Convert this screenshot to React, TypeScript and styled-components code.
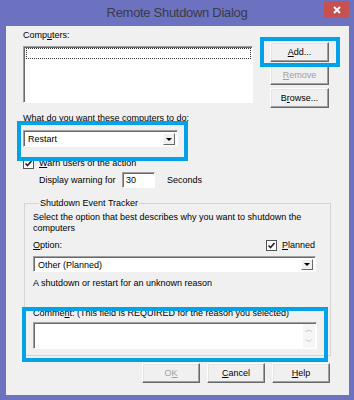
import styled, { createGlobalStyle } from 'styled-components'

const GlobalStyle = createGlobalStyle`
  html, body {
    margin: 0;
    padding: 0;
  }
  body {
    font-family: "Liberation Sans", Arial, sans-serif;
    font-size: 9px;
    color: #000;
  }
  * {
    box-sizing: border-box;
  }
`

function Check() {
  return (
    <svg width="9" height="9" viewBox="0 0 9 9">
      <path d="M1.5 4.5 L3.5 6.5 L7.5 2" fill="none" stroke="#222" strokeWidth="1.6" />
    </svg>
  )
}

function CloseGlyph() {
  return (
    <svg width="8" height="8" viewBox="0 0 8 8">
      <path d="M1 1 L7 7 M7 1 L1 7" stroke="#fff" strokeWidth="2" />
    </svg>
  )
}

function App() {
  return (
    <>
      <GlobalStyle />
      <Frame>
        <TitleBar>
          <TitleSpacer />
          <Title>Remote Shutdown Dialog</Title>
          <CloseButton><CloseGlyph /></CloseButton>
        </TitleBar>
        <Client>
          <TopSection>
            <div>
              <Label>Comp<u>u</u>ters:</Label>
              <ListBox>
                <FocusRow />
              </ListBox>
            </div>
            <ButtonColumn>
              <Button><u>A</u>dd...</Button>
              <Button disabled><u>R</u>emove</Button>
              <Button>B<u>r</u>owse...</Button>
            </ButtonColumn>
          </TopSection>

          <Label $top={4}><u>W</u>hat do you want these computers to do:</Label>
          <Select $width={155} $height={17} $top={6}>
            <span>Restart</span>
            <Arrow />
          </Select>

          <CheckRow $top={10}>
            <CheckBox><Check /></CheckBox>
            <span><u>W</u>arn users of the action</span>
          </CheckRow>

          <WarnRow>
            <WarnLabel>Display warning for</WarnLabel>
            <NumberBox>30</NumberBox>
            <span>Seconds</span>
          </WarnRow>

          <Group>
            <Legend>Shutdown Event Tracker</Legend>
            <Para>Select the option that best describes why you want to shutdown the computers</Para>
            <OptionRow>
              <span><u>O</u>ption:</span>
              <CheckRow $top={0}>
                <CheckBox><Check /></CheckBox>
                <span><u>P</u>lanned</span>
              </CheckRow>
            </OptionRow>
            <Select $height={16} $top={5}>
              <span>Other (Planned)</span>
              <Arrow />
            </Select>
            <Label $top={5}>A shutdown or restart for an unknown reason</Label>
            <Label $top={18}>Comme<u>n</u>t: (This field is REQUIRED for the reason you selected)</Label>
            <CommentBox>
              <ScrollBar>
                <span>︿</span>
                <span>﹀</span>
              </ScrollBar>
            </CommentBox>
          </Group>

          <Footer>
            <Button disabled $width={58}>O<u>K</u></Button>
            <Button $width={58}><u>C</u>ancel</Button>
            <Button $width={58}><u>H</u>elp</Button>
          </Footer>

          <Highlight style={{ left: 254, top: 11, width: 80, height: 30 }} />
          <Highlight style={{ left: 11, top: 95, width: 171, height: 40 }} />
          <Highlight style={{ left: 16, top: 281, width: 306, height: 55 }} />
        </Client>
      </Frame>
    </>
  )
}

export default App

const Frame = styled.div`
  width: 354px;
  height: 400px;
  background: #6d72c0;
  display: flex;
  flex-direction: column;
`

const TitleBar = styled.div`
  height: 26px;
  flex-shrink: 0;
  display: flex;
  align-items: flex-start;
  padding-right: 5px;
`

const TitleSpacer = styled.div`
  width: 25px;
  flex-shrink: 0;
`

const Title = styled.div`
  flex: 1;
  text-align: center;
  padding-top: 5px;
  padding-left: 5px;
  font-size: 13px;
  line-height: 15px;
  letter-spacing: -0.3px;
  color: #3a3a48;
`

const CloseButton = styled.div`
  flex-shrink: 0;
  margin-top: 1px;
  width: 25px;
  height: 17px;
  background: rgb(199, 80, 80);
  display: flex;
  align-items: center;
  justify-content: center;
`

const Client = styled.div`
  position: relative;
  flex-shrink: 0;
  margin: 0 5px 0 6px;
  height: 369px;
  background: #f0f0f0;
  padding: 3px 18px 0 17px;
`

const TopSection = styled.div`
  display: grid;
  grid-template-columns: 230px 1fr;
  column-gap: 17px;
`

const Label = styled.div<{ $top?: number }>`
  line-height: 12px;
  height: 12px;
  margin-top: ${p => p.$top ?? 0}px;
  white-space: nowrap;
`

const ListBox = styled.div`
  margin-top: 5px;
  height: 57px;
  background: #fff;
  border: 1px solid;
  border-color: #a0a0a0 #fff #fff #a0a0a0;
  box-shadow: inset 1px 1px 0 #696969;
  padding: 1px 1px 0 2px;
`

const FocusRow = styled.div`
  height: 11px;
  border: 1px dotted #333;
`

const ButtonColumn = styled.div`
  padding-top: 13px;
  display: flex;
  flex-direction: column;
  gap: 3px;
`

const Button = styled.div<{ disabled?: boolean; $width?: number }>`
  width: ${p => p.$width ?? 59}px;
  height: 20px;
  background: #f0f0f0;
  border: 1px solid;
  border-color: #fff #696969 #696969 #fff;
  box-shadow: inset -1px -1px 0 #a0a0a0, inset 1px 1px 0 #e3e3e3;
  display: flex;
  align-items: center;
  justify-content: center;
  color: ${p => (p.disabled ? '#a0a0a0' : '#000')};
`

const Select = styled.div<{ $width?: number; $height: number; $top: number }>`
  margin-top: ${p => p.$top}px;
  width: ${p => (p.$width ? `${p.$width}px` : '100%')};
  height: ${p => p.$height}px;
  background: #fff;
  border: 1px solid;
  border-color: #a0a0a0 #fff #fff #a0a0a0;
  box-shadow: inset 1px 1px 0 #696969;
  display: flex;
  align-items: center;
  justify-content: space-between;
  padding: 2px 2px 1px 4px;
`

const Arrow = styled.div`
  width: 12px;
  height: 100%;
  background: #f0f0f0;
  border: 1px solid;
  border-color: #fff #696969 #696969 #fff;
  display: flex;
  align-items: center;
  justify-content: center;

  &::after {
    content: '';
    border-left: 3px solid transparent;
    border-right: 3px solid transparent;
    border-top: 3px solid #000;
  }
`

const CheckRow = styled.div<{ $top: number }>`
  margin-top: ${p => p.$top}px;
  height: 12px;
  display: flex;
  align-items: center;
  gap: 5px;
`

const CheckBox = styled.div`
  width: 11px;
  height: 11px;
  background: #fff;
  border: 1px solid #555;
  display: flex;
  align-items: center;
  justify-content: center;
`

const WarnRow = styled.div`
  margin-top: 3px;
  padding-left: 16px;
  height: 16px;
  display: flex;
  align-items: center;
`

const WarnLabel = styled.span`
  width: 83px;
`

const NumberBox = styled.div`
  width: 33px;
  height: 16px;
  margin-right: 12px;
  background: #fff;
  border: 1px solid;
  border-color: #a0a0a0 #fff #fff #a0a0a0;
  box-shadow: inset 1px 1px 0 #696969;
  padding: 2px 3px;
  line-height: 11px;
`

const Group = styled.fieldset`
  margin: 9px 0 0 1px;
  padding: 3px 14px 6px 8px;
  border: 1px solid #d5d5d5;
  min-width: 0;
`

const Legend = styled.legend`
  margin-left: 6px;
  padding: 0 1px;
  line-height: 12px;
`

const Para = styled.div`
  line-height: 11px;
`

const OptionRow = styled.div`
  margin-top: 5px;
  height: 12px;
  display: flex;
  align-items: center;
  justify-content: space-between;
  padding-right: 1px;
`

const CommentBox = styled.div`
  margin-top: 3px;
  width: 284px;
  height: 27px;
  background: #fff;
  border: 1px solid;
  border-color: #a0a0a0 #fff #fff #a0a0a0;
  box-shadow: inset 1px 1px 0 #696969;
  display: flex;
  justify-content: flex-end;
  padding: 1px 1px 0 0;
`

const ScrollBar = styled.div`
  width: 12px;
  background: #f6f6f6;
  display: flex;
  flex-direction: column;
  justify-content: space-between;
  align-items: center;
  color: #a8a8a8;
  font-size: 8px;
  line-height: 12px;
`

const Footer = styled.div`
  margin-top: 7px;
  display: flex;
  justify-content: flex-end;
  gap: 7px;
  padding-right: 1px;
`

const Highlight = styled.div`
  position: absolute;
  border: 4px solid #00a2e8;
`
